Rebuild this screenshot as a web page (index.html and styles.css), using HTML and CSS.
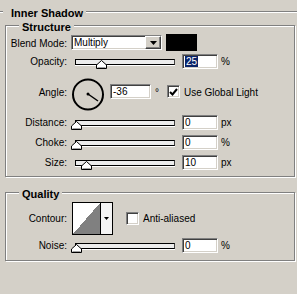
FILE: index.html
```html
<!DOCTYPE html>
<html>
<head>
<meta charset="utf-8">
<link rel="stylesheet" href="styles.css">
</head>
<body>
<div class="title"><span class="line short"></span><span class="title-text">Inner Shadow</span><span class="line long"></span></div>

<div class="group structure">
  <div class="legend">Structure</div>

  <div class="row row-blend">
    <span class="lbl">Blend Mode:</span>
    <div class="select">
      <span class="select-text">Multiply</span>
      <span class="select-btn"><svg width="7" height="4" viewBox="0 0 7 4"><polygon points="0,0 7,0 3.5,4" fill="#000"/></svg></span>
    </div>
    <div class="swatch"></div>
  </div>

  <div class="row row-std row-opacity">
    <span class="lbl">Opacity:</span>
    <div class="slider"><svg class="thumb" style="left:20px" width="11" height="9" viewBox="0 0 11 9"><polygon points="5.5,0.5 10.5,5 10.5,8.5 0.5,8.5 0.5,5" fill="#fff" stroke="#000"/><line x1="1.5" y1="7.5" x2="9.5" y2="7.5" stroke="#a0a0a0"/></svg></div>
    <div class="field"><span class="hl">25</span></div>
    <span class="unit">%</span>
  </div>

  <div class="row row-angle">
    <span class="lbl lbl-angle">Angle:</span>
    <svg class="dial" width="34" height="33" viewBox="0 0 34 33">
      <circle cx="17" cy="16.5" r="15" fill="none" stroke="#000" stroke-width="2"/>
      <circle cx="17" cy="16" r="1.5" fill="#000"/>
      <line x1="17" y1="16" x2="27" y2="23" stroke="#000" stroke-width="1.5"/>
    </svg>
    <div class="field field-angle">-36</div>
    <span class="deg">°</span>
    <span class="check check-angle"><svg width="9" height="8" viewBox="0 0 9 8"><polyline points="1,4 3.5,6.5 8,1" fill="none" stroke="#000" stroke-width="2"/></svg></span>
    <span class="check-label">Use Global Light</span>
  </div>

  <div class="row row-std row-distance">
    <span class="lbl">Distance:</span>
    <div class="slider"><svg class="thumb" style="left:-5px" width="11" height="9" viewBox="0 0 11 9"><polygon points="5.5,0.5 10.5,5 10.5,8.5 0.5,8.5 0.5,5" fill="#fff" stroke="#000"/><line x1="1.5" y1="7.5" x2="9.5" y2="7.5" stroke="#a0a0a0"/></svg></div>
    <div class="field">0</div>
    <span class="unit">px</span>
  </div>

  <div class="row row-std row-next">
    <span class="lbl">Choke:</span>
    <div class="slider"><svg class="thumb" style="left:-5px" width="11" height="9" viewBox="0 0 11 9"><polygon points="5.5,0.5 10.5,5 10.5,8.5 0.5,8.5 0.5,5" fill="#fff" stroke="#000"/><line x1="1.5" y1="7.5" x2="9.5" y2="7.5" stroke="#a0a0a0"/></svg></div>
    <div class="field">0</div>
    <span class="unit">%</span>
  </div>

  <div class="row row-std row-next">
    <span class="lbl">Size:</span>
    <div class="slider"><svg class="thumb" style="left:5px" width="11" height="9" viewBox="0 0 11 9"><polygon points="5.5,0.5 10.5,5 10.5,8.5 0.5,8.5 0.5,5" fill="#fff" stroke="#000"/><line x1="1.5" y1="7.5" x2="9.5" y2="7.5" stroke="#a0a0a0"/></svg></div>
    <div class="field">10</div>
    <span class="unit">px</span>
  </div>
</div>

<div class="group quality">
  <div class="legend">Quality</div>

  <div class="row row-contour">
    <span class="lbl">Contour:</span>
    <div class="contour">
      <span class="contour-preview"></span>
      <span class="contour-btn"><svg width="5" height="3" viewBox="0 0 5 3"><polygon points="0,0 5,0 2.5,3" fill="#000"/></svg></span>
    </div>
    <span class="check check-aa"></span>
    <span class="check-label">Anti-aliased</span>
  </div>

  <div class="row row-std row-noise">
    <span class="lbl">Noise:</span>
    <div class="slider"><svg class="thumb" style="left:-5px" width="11" height="9" viewBox="0 0 11 9"><polygon points="5.5,0.5 10.5,5 10.5,8.5 0.5,8.5 0.5,5" fill="#fff" stroke="#000"/><line x1="1.5" y1="7.5" x2="9.5" y2="7.5" stroke="#a0a0a0"/></svg></div>
    <div class="field">0</div>
    <span class="unit">%</span>
  </div>
</div>
</body>
</html>
```

FILE: styles.css
```css
* { box-sizing: border-box; }
html, body { margin: 0; padding: 0; }
body {
  width: 297px;
  height: 294px;
  overflow: hidden;
  background: #d4d0c8;
  font-family: "Liberation Sans", Arial, sans-serif;
  font-size: 10px;
  color: #000;
}

.title {
  display: flex;
  align-items: flex-start;
  height: 13px;
  margin-top: 7px;
}
.line {
  height: 2px;
  margin-top: 4px;
  border-top: 1px solid #808080;
  border-bottom: 1px solid #fff;
}
.line.short { width: 3px; }
.line.long { flex: 1; }
.title-text {
  font-weight: bold;
  font-size: 11px;
  line-height: 13px;
  margin: 0 3px 0 8px;
}

.group {
  position: relative;
  margin: 5px 2px 0 5px;
  border: 1px solid #808080;
  box-shadow: inset 1px 1px 0 #fff, 1px 1px 0 #fff;
}
.structure { padding: 9px 0 6px 0; }
.quality { margin-top: 15px; padding: 9px 0 7px 0; }

.legend {
  position: absolute;
  top: -5px;
  left: 13px;
  padding: 0 3px;
  background: #d4d0c8;
  font-weight: bold;
  font-size: 11px;
  line-height: 13px;
}

.row {
  display: flex;
  align-items: center;
  height: 15px;
}
.lbl {
  flex: none;
  width: 61px;
  margin-right: 4px;
  text-align: right;
  line-height: 12px;
}
.row-blend .lbl { padding-top: 2px; }

.select {
  display: flex;
  width: 91px;
  height: 15px;
  background: #fff;
  border: 1px solid;
  border-color: #808080 #fff #fff #808080;
  box-shadow: inset 1px 1px 0 #404040, inset -1px -1px 0 #d4d0c8;
}
.select-text {
  flex: 1;
  padding-left: 2px;
  line-height: 13px;
}
.select-btn {
  width: 16px;
  height: 13px;
  display: flex;
  align-items: center;
  justify-content: center;
  background: #d4d0c8;
  border: 1px solid;
  border-color: #fff #404040 #404040 #fff;
  box-shadow: inset -1px -1px 0 #808080;
}
.swatch {
  width: 31px;
  height: 17px;
  margin-left: 4px;
  background: #000;
}

.row-opacity { margin-top: 4px; }
.row-angle {
  height: 33px;
  margin-top: 9px;
  align-items: flex-start;
}
.row-distance { margin-top: 4px; }
.row-next { margin-top: 5px; }

.slider {
  position: relative;
  align-self: flex-start;
  width: 100px;
  height: 6px;
  margin: 5px 0 0 4px;
  background: #ececec;
  border: 1px solid #000;
  border-right-color: #404040;
  box-shadow: 0 1px 0 #fff;
}
.thumb {
  position: absolute;
  top: 0;
  display: block;
}

.field {
  flex: none;
  width: 36px;
  height: 15px;
  margin-left: 7px;
  padding-left: 2px;
  display: flex;
  align-items: center;
  background: #fff;
  border: 1px solid;
  border-color: #808080 #fff #fff #808080;
  box-shadow: inset 1px 1px 0 #404040, inset -1px -1px 0 #d4d0c8;
  line-height: 12px;
}
.hl {
  background: #0a246a;
  color: #fff;
  padding: 0 1px;
  line-height: 11px;
}
.unit { margin-left: 3px; line-height: 12px; }

.lbl-angle { margin-top: 9px; }
.dial { display: block; flex: none; }
.field-angle {
  width: 41px;
  margin-left: 5px;
  margin-top: 6px;
}
.deg { margin-left: 4px; margin-top: 9px; line-height: 12px; }
.check {
  flex: none;
  width: 13px;
  height: 13px;
  display: flex;
  align-items: center;
  justify-content: center;
  background: #fff;
  border: 1px solid;
  border-color: #808080 #fff #fff #808080;
  box-shadow: inset 1px 1px 0 #404040, inset -1px -1px 0 #d4d0c8;
}
.check-angle { margin-left: 8px; margin-top: 7px; }
.check-label { margin-left: 4px; line-height: 12px; }
.row-angle .check-label { margin-top: 9px; }

.row-contour { height: 33px; }
.contour {
  display: flex;
  width: 41px;
  height: 33px;
  margin-left: 1px;
  border: 1px solid #000;
  background: #fff;
}
.contour-preview {
  width: 28px;
  border-right: 1px solid #000;
  background: linear-gradient(to bottom right, #fff 50%, #808080 50%);
}
.contour-btn {
  flex: 1;
  display: flex;
  align-items: center;
  justify-content: center;
  background: #f4f4f4;
}
.check-aa { margin-left: 13px; }
.row-noise { margin-top: 3px; }
```
